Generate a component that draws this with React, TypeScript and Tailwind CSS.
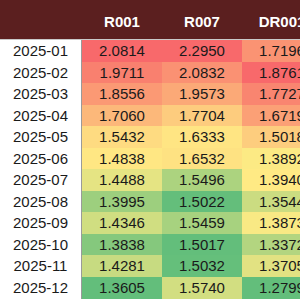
const columns = ['R001', 'R007', 'DR001'];

const rows = [
  { month: '2025-01', values: [2.0814, 2.295, 1.7196] },
  { month: '2025-02', values: [1.9711, 2.0832, 1.8761] },
  { month: '2025-03', values: [1.8556, 1.9573, 1.7727] },
  { month: '2025-04', values: [1.706, 1.7704, 1.6719] },
  { month: '2025-05', values: [1.5432, 1.6333, 1.5018] },
  { month: '2025-06', values: [1.4838, 1.6532, 1.3892] },
  { month: '2025-07', values: [1.4488, 1.5496, 1.394] },
  { month: '2025-08', values: [1.3995, 1.5022, 1.3544] },
  { month: '2025-09', values: [1.4346, 1.5459, 1.3873] },
  { month: '2025-10', values: [1.3838, 1.5017, 1.3372] },
  { month: '2025-11', values: [1.4281, 1.5032, 1.3705] },
  { month: '2025-12', values: [1.3605, 1.574, 1.2799] },
];

// excel-style 3 colour scale: green (low) -> yellow (median) -> red (high)
const GREEN = [99, 190, 123];
const YELLOW = [255, 235, 132];
const RED = [248, 105, 107];

const mix = (a: number[], b: number[], t: number) =>
  `rgb(${a.map((v, i) => Math.round(v + (b[i] - v) * t)).join(',')})`;

const scales = columns.map((_, c) => {
  const sorted = rows.map((r) => r.values[c]).sort((a, b) => a - b);
  const mid = (sorted[5] + sorted[6]) / 2;
  return { min: sorted[0], mid, max: sorted[sorted.length - 1] };
});

const cellColor = (v: number, c: number) => {
  const { min, mid, max } = scales[c];
  if (v <= mid) return mix(GREEN, YELLOW, (v - min) / (mid - min));
  return mix(YELLOW, RED, (v - mid) / (max - mid));
};

export default function App() {
  return (
    <div className="w-[300px] h-[300px] overflow-hidden bg-white font-['Liberation_Sans',Arial,sans-serif] text-[15px] text-[#1a1a1a]">
      <div className="w-[322px]">
        <div className="grid grid-cols-[82px_80px_80px_80px] h-[40px] bg-[#5b1f1f] border-b border-[#c9c9c9]">
          <div />
          {columns.map((col) => (
            <div key={col} className="flex items-center justify-center pt-[6px] font-bold text-white">
              {col}
            </div>
          ))}
        </div>
        {rows.map((row) => (
          <div key={row.month} className="grid grid-cols-[82px_80px_80px_80px] h-[21.5px]">
            <div className="flex items-center justify-center bg-white border-r border-[#9a9a9a]">
              {row.month}
            </div>
            {row.values.map((v, c) => (
              <div
                key={c}
                className="flex items-center justify-center"
                style={{ backgroundColor: cellColor(v, c) }}
              >
                {v.toFixed(4)}
              </div>
            ))}
          </div>
        ))}
        <div className="h-px bg-[#9a9a9a]" />
      </div>
    </div>
  );
}
